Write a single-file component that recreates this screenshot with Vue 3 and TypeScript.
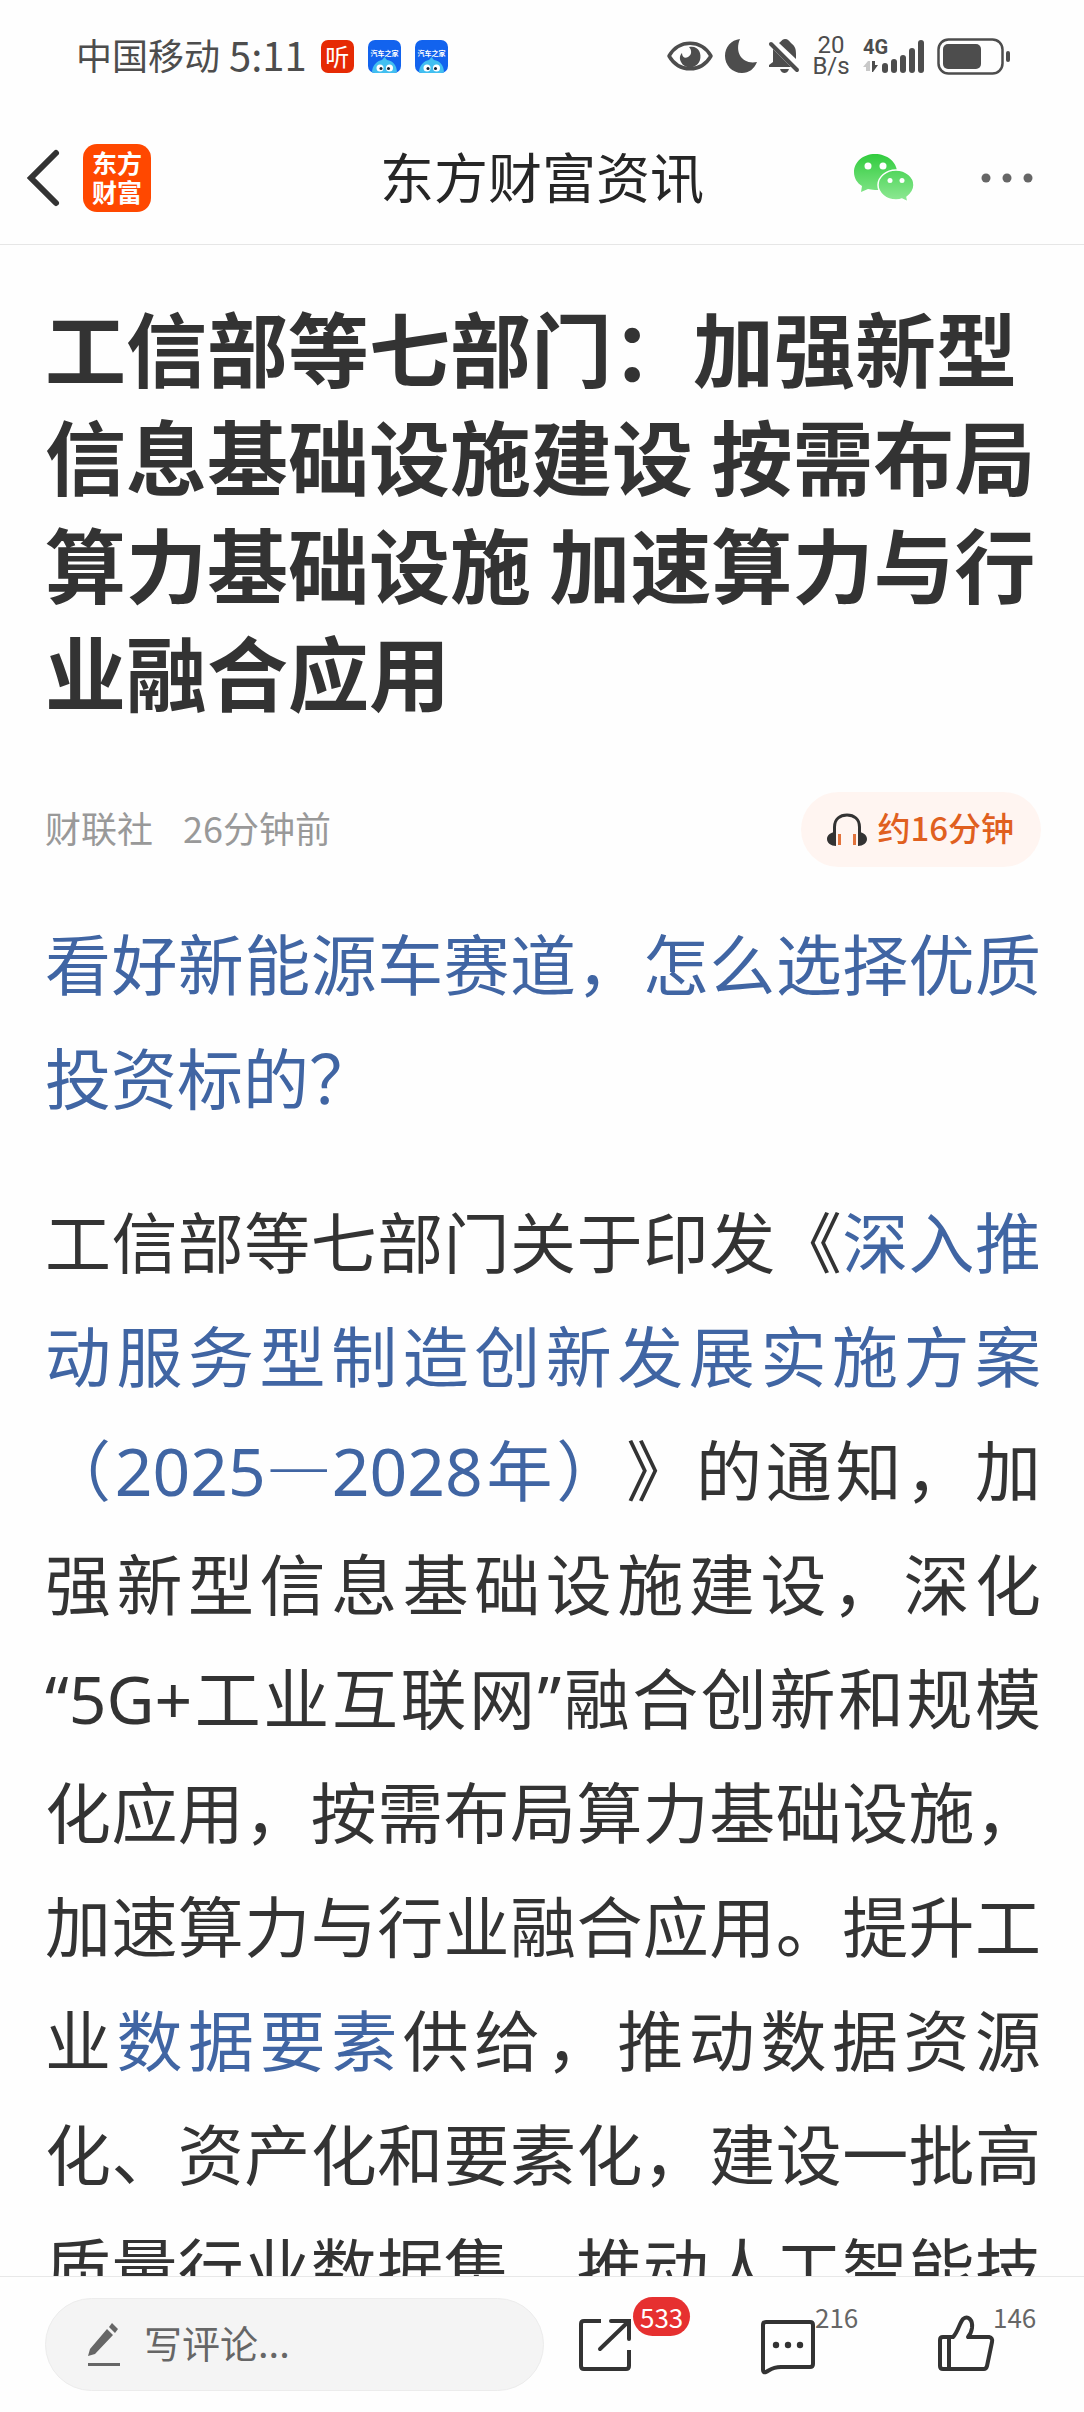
<script setup lang="ts">
import { ref } from 'vue'

interface Segment {
  text: string
  link?: boolean
  latin?: boolean
  breakBefore?: boolean
}

const comment = ref('')
const signalBars = [10, 14, 18, 25, 33]

const title = '工信部等七部门：加强新型信息基础设施建设 按需布局算力基础设施 加速算力与行业融合应用'

const article: Segment[] = [
  { text: '工信部等七部门关于印发《' },
  { text: '深入推动服务型制造创新发展实施方案（', link: true },
  { text: '2025', link: true, latin: true },
  { text: '—', link: true },
  { text: '2028', link: true, latin: true },
  { text: '年）', link: true },
  { text: '》的通知，加强新型信息基础设施建设，深化' },
  { text: '“5G+', latin: true, breakBefore: true },
  { text: '工业互联网' },
  { text: '”', latin: true },
  { text: '融合创新和规模化应用，按需布局算力基础设施，加速算力与行业融合应用。提升工业' },
  { text: '数据要素', link: true },
  { text: '供给，推动数据资源化、资产化和要素化，建设一批高质量行业数据集，推动人工智能技' },
]
</script>

<template>
  <div class="screen" lang="zh-CN">
    <div class="status">
      <div class="status-left">
        <span class="carrier">中国移动</span>
        <span class="clock">5:11</span>
        <span class="app-badge listen">听</span>
        <svg v-for="n in 2" :key="n" class="car-badge" viewBox="0 0 33 33" width="33" height="33">
          <defs>
            <clipPath :id="`car-${n}`"><rect width="33" height="33" rx="7" /></clipPath>
          </defs>
          <g :clip-path="`url(#car-${n})`">
            <rect width="33" height="33" fill="#1263ee" />
            <path d="M4 33C4 25 9 21 14 20L16.500 17L19 20C25 21 29 25 29 33Z" fill="#42bff0" />
            <circle cx="12" cy="28" r="3.500" fill="#fff" />
            <circle cx="21.500" cy="28" r="3.500" fill="#fff" />
            <circle cx="13" cy="28.500" r="1.500" fill="#123" />
            <circle cx="20.500" cy="28.500" r="1.500" fill="#123" />
          </g>
          <text x="16.500" y="16" text-anchor="middle" class="car-text">汽车之家</text>
        </svg>
      </div>
      <div class="status-right">
        <svg width="46" height="32" viewBox="0 0 46 32">
          <path d="M2 16C12-1 34-1 44 16C34 33 12 33 2 16Z" fill="none" stroke="#4d4d4d" stroke-width="3.500" stroke-linejoin="round" />
          <path d="M22 7C31 5 35 13 33 20C30 29 18 30 14 22C12 18 13 15 15 13C15 17 18 19 21 17C25 15 25 10 22 7Z" fill="#4d4d4d" />
        </svg>
        <svg class="moon" width="32" height="34" viewBox="0 0 32 34">
          <path d="M15 0C9 14 18 26 32 23C29 30 24 34 17 34C7 34 0 26 0 17C0 8 6 1 15 0Z" fill="#4d4d4d" />
        </svg>
        <svg class="bell" width="30" height="34" viewBox="0 0 30 34">
          <path d="M10 4C12 3 13 0 16 0C19 0 20 2 22 4C26 7 27 10 27 15V20ZM4 10L22 28H0V26L4 23ZM11 30H20C19 33 17 34 15.500 34C14 34 12 33 11 30Z" fill="#4d4d4d" />
          <path d="M2 5L28 31" stroke="#4d4d4d" stroke-width="4" stroke-linecap="round" />
        </svg>
        <span class="speed">20<br />B/s</span>
        <span class="network">
          <span class="net-type">4G</span>
          <svg width="58" height="34" viewBox="0 0 58 34">
            <path d="M0 28L5 22H7V32H3V28Z" fill="#c8c8c8" />
            <path d="M9 22H12V26H15L10 33H9Z" fill="#4d4d4d" />
            <rect v-for="(h, i) in signalBars" :key="i" :x="19 + i * 9" :y="34 - h" width="6" :height="h" rx="3" fill="#4d4d4d" />
          </svg>
        </span>
        <svg class="battery" width="74" height="37" viewBox="0 0 74 37">
          <rect x="1.500" y="1.500" width="64" height="34" rx="10" fill="none" stroke="#4d4d4d" stroke-width="2.500" />
          <rect x="6" y="6" width="38" height="25" rx="5" fill="#4d4d4d" />
          <rect x="69" y="13" width="4" height="11" rx="2" fill="#4d4d4d" />
        </svg>
      </div>
    </div>

    <header class="nav">
      <div class="nav-side">
        <button class="plain" type="button" aria-label="返回">
          <svg width="32" height="56" viewBox="0 0 32 56">
            <path d="M29 3L4 28L29 53" fill="none" stroke="#333" stroke-width="6" stroke-linecap="round" stroke-linejoin="miter" />
          </svg>
        </button>
        <a class="logo" href="#">东方<br />财富</a>
      </div>
      <div class="nav-title">东方财富资讯</div>
      <div class="nav-side right">
        <button class="plain" type="button" aria-label="分享到微信">
          <svg width="62" height="50" viewBox="0 0 62 50">
            <defs>
              <linearGradient id="wx" x1="0" y1="0" x2="0" y2="50" gradientUnits="userSpaceOnUse">
                <stop offset="0" stop-color="#2fcb3c" />
                <stop offset="1" stop-color="#93ea98" />
              </linearGradient>
            </defs>
            <path d="M22 1C34 1 44 9 44 19C44 29 34 37 22 37C19 37 17 36 15 36L8 39L9 33C4 30 1 25 1 19C1 9 10 1 22 1Z" fill="url(#wx)" />
            <path d="M43 17C53 17 61 24 61 32C61 37 58 41 54 44L55 49L49 46C47 47 45 47 43 47C33 47 25 40 25 32C25 24 33 17 43 17Z" fill="url(#wx)" stroke="#fff" stroke-width="1.500" />
            <circle cx="15" cy="13" r="3.500" fill="#fff" />
            <circle cx="30" cy="13" r="3.500" fill="#fff" />
            <circle cx="37" cy="27.500" r="2.500" fill="#fff" />
            <circle cx="49" cy="27.500" r="2.500" fill="#fff" />
          </svg>
        </button>
        <button class="plain" type="button" aria-label="更多">
          <svg width="52" height="10" viewBox="0 0 52 10">
            <circle v-for="x in [5, 26, 47]" :key="x" :cx="x" cy="5" r="4.500" fill="#666" />
          </svg>
        </button>
      </div>
    </header>

    <main class="content">
      <h1>{{ title }}</h1>
      <div class="meta">
        <span class="meta-text">财联社</span>
        <span class="meta-text">26分钟前</span>
        <button class="listen-pill" type="button">
          <svg width="40" height="34" viewBox="0 0 40 34">
            <path d="M7.500 20V14C7.500 6 13 2 20 2C27 2 32.500 6 32.500 14V20" fill="none" stroke="#333" stroke-width="3" />
            <path d="M9 19V33C4 33 0 30 0 26C0 22 4 19 9 19ZM31 19V33C36 33 40 30 40 26C40 22 36 19 31 19Z" fill="#333" />
            <path d="M12.500 21V32M27.500 21V32" stroke="#e2733c" stroke-width="3" />
          </svg>
          <span class="meta-text">约16分钟</span>
        </button>
      </div>
      <p><a href="#">看好新能源车赛道，怎么选择优质投资标的？</a></p>
      <p class="running">
        <template v-for="(s, i) in article" :key="i"><wbr v-if="s.breakBefore" /><a v-if="s.link" href="#" :class="{ latin: s.latin }">{{ s.text }}</a><span v-else :class="{ latin: s.latin }">{{ s.text }}</span></template>
      </p>
    </main>

    <footer class="bar">
      <label class="comment-box">
        <svg width="32" height="44" viewBox="0 0 32 44">
          <path d="M0 33L2 26L19 6L25 12L7 31ZM21 4L24 0L30 6L27 10Z" fill="#666" />
          <path d="M0 41.500H32" stroke="#666" stroke-width="3" />
        </svg>
        <input v-model="comment" type="text" placeholder="写评论..." aria-label="写评论" />
      </label>
      <div class="actions">
        <button class="plain action" type="button" aria-label="分享">
          <svg width="58" height="56" viewBox="0 0 58 56">
            <path d="M24 4H7Q4 4 4 7V49Q4 52 7 52H49Q52 52 52 49V33" fill="none" stroke="#333" stroke-width="4" stroke-linejoin="round" />
            <path d="M34 4H52V22M51 5L23 32" fill="none" stroke="#333" stroke-width="4" stroke-linecap="round" />
          </svg>
          <span class="badge">533</span>
        </button>
        <button class="plain action" type="button" aria-label="评论">
          <svg width="58" height="56" viewBox="-2 0 58 56">
            <path d="M7 5H51Q54 5 54 8V47Q54 50 51 50H22C13 50 11 53 7 55Q4 56 4 53V8Q4 5 7 5Z" fill="none" stroke="#333" stroke-width="4" />
            <circle v-for="x in [17, 29, 41]" :key="x" :cx="x" cy="28" r="3.200" fill="#333" />
          </svg>
          <span class="count">216</span>
        </button>
        <button class="plain action" type="button" aria-label="点赞">
          <svg width="56" height="56" viewBox="0 0 56 56">
            <path d="M12 20V52M6 20H16C21 15 22 7 26 2C31-2 36 3 35 11Q34 17 31 20H52Q56 21 55 25L50 49Q49 52 47 52H6Q3 52 3 49V23Q3 20 6 20Z" fill="none" stroke="#333" stroke-width="4" stroke-linejoin="round" />
          </svg>
          <span class="count">146</span>
        </button>
      </div>
    </footer>
  </div>
</template>

<style>
body {
  margin: 0;
  background: #fefefe;
}
</style>

<style scoped>
.screen {
  display: flex;
  flex-direction: column;
  height: 100vh;
  overflow: hidden;
  background: #fefefe;
  color: #333;
  font-family: 'Noto Sans CJK SC', sans-serif;
}

svg {
  display: block;
  flex: none;
  overflow: visible;
}

a {
  color: #4065a3;
  text-decoration: none;
}

.plain {
  display: flex;
  padding: 0;
  border: 0;
  background: none;
  font: inherit;
}

.status {
  display: flex;
  flex: none;
  align-items: center;
  justify-content: space-between;
  height: 112px;
  padding: 0 73px 0 76px;
  color: #4d4d4d;
}

.status-left,
.status-right {
  display: flex;
  align-items: center;
}

.carrier {
  padding-bottom: 4px;
  font-size: 36px;
}

.clock {
  margin: 0 14px 0 9px;
  padding-bottom: 4px;
  font-size: 40px;
}

.app-badge {
  width: 33px;
  height: 33px;
  border-radius: 7px;
  background: #e62a04;
  color: #fff;
  font-size: 24px;
  line-height: 32px;
  text-align: center;
}

.car-badge {
  margin-left: 14px;
}

.car-text {
  fill: #fff;
  font-size: 7px;
  font-weight: 700;
}

.moon,
.bell {
  margin-left: 12px;
}

.speed {
  width: 64px;
  font-family: Roboto, sans-serif;
  font-size: 24px;
  line-height: 21px;
  text-align: center;
}

.network {
  position: relative;
}

.net-type {
  position: absolute;
  top: 0;
  left: 0;
  font-family: Roboto, sans-serif;
  font-size: 20px;
  font-weight: 700;
  line-height: 16px;
}

.battery {
  margin-left: 16px;
}

.nav {
  display: grid;
  flex: none;
  grid-template-columns: 1fr auto 1fr;
  align-items: center;
  height: 132px;
  padding: 0 27px;
  border-bottom: 1px solid #e6e6e6;
}

.nav-side {
  display: flex;
  gap: 24px;
  align-items: center;
}

.nav-side.right {
  gap: 66px;
  justify-content: flex-end;
  padding-right: 24px;
}

.logo {
  box-sizing: border-box;
  width: 68px;
  height: 68px;
  padding-top: 4px;
  border-radius: 14px;
  background: #ff4800;
  color: #fff;
  font-size: 25px;
  font-weight: 700;
  line-height: 29px;
  text-align: center;
}

.nav-title {
  padding-bottom: 4px;
  color: #262626;
  font-size: 54px;
  line-height: 64px;
}

.content {
  flex: 1;
  min-height: 0;
  overflow: hidden;
  padding: 47px 43px 0 45px;
}

h1 {
  margin: 0;
  font-size: 81px;
  font-weight: 700;
  line-height: 108px;
  text-spacing-trim: space-all;
}

.meta {
  display: flex;
  gap: 30px;
  align-items: center;
  margin: 68px 0 37px;
  color: #999;
  font-size: 36px;
}

.meta-text {
  padding-bottom: 6px;
}

.listen-pill {
  display: flex;
  gap: 10px;
  align-items: center;
  height: 75px;
  margin-left: auto;
  padding: 0 27px 0 26px;
  border: 0;
  border-radius: 38px;
  background: #fff5f1;
  color: #e0601f;
  font-family: inherit;
  font-size: 33px;
  font-weight: 500;
}

p {
  margin: 0 0 50px;
  font-size: 66px;
  line-height: 114px;
  text-align: justify;
  text-spacing-trim: space-all;
}

.running {
  text-align-last: justify;
}

.latin {
  font-family: 'Noto Sans', sans-serif;
  line-height: 1;
}

.bar {
  display: flex;
  flex: none;
  align-items: center;
  height: 135px;
  padding: 0 45px;
  border-top: 1px solid #e8e8e8;
}

.comment-box {
  display: flex;
  box-sizing: border-box;
  flex: 1;
  gap: 24px;
  align-items: center;
  min-width: 0;
  height: 93px;
  padding: 0 42px;
  border: 1px solid #ececec;
  border-radius: 47px;
  background: #f4f4f4;
}

.comment-box input {
  flex: 1;
  min-width: 0;
  padding: 0 0 6px;
  border: 0;
  outline: 0;
  background: none;
  color: #666;
  font-family: inherit;
  font-size: 38px;
}

.comment-box input::placeholder {
  color: #666;
  opacity: 1;
}

.actions {
  display: flex;
  flex: none;
  gap: 122px;
  padding: 0 46px 0 33px;
}

.action {
  position: relative;
}

.badge,
.count {
  position: absolute;
  font-size: 26px;
}

.badge {
  top: -20px;
  left: 56px;
  padding: 0 7px;
  border-radius: 20px;
  background: #e63030;
  color: #fff;
  line-height: 39px;
}

.count {
  top: -18px;
  left: 100%;
  color: #666;
  line-height: 36px;
}
</style>
